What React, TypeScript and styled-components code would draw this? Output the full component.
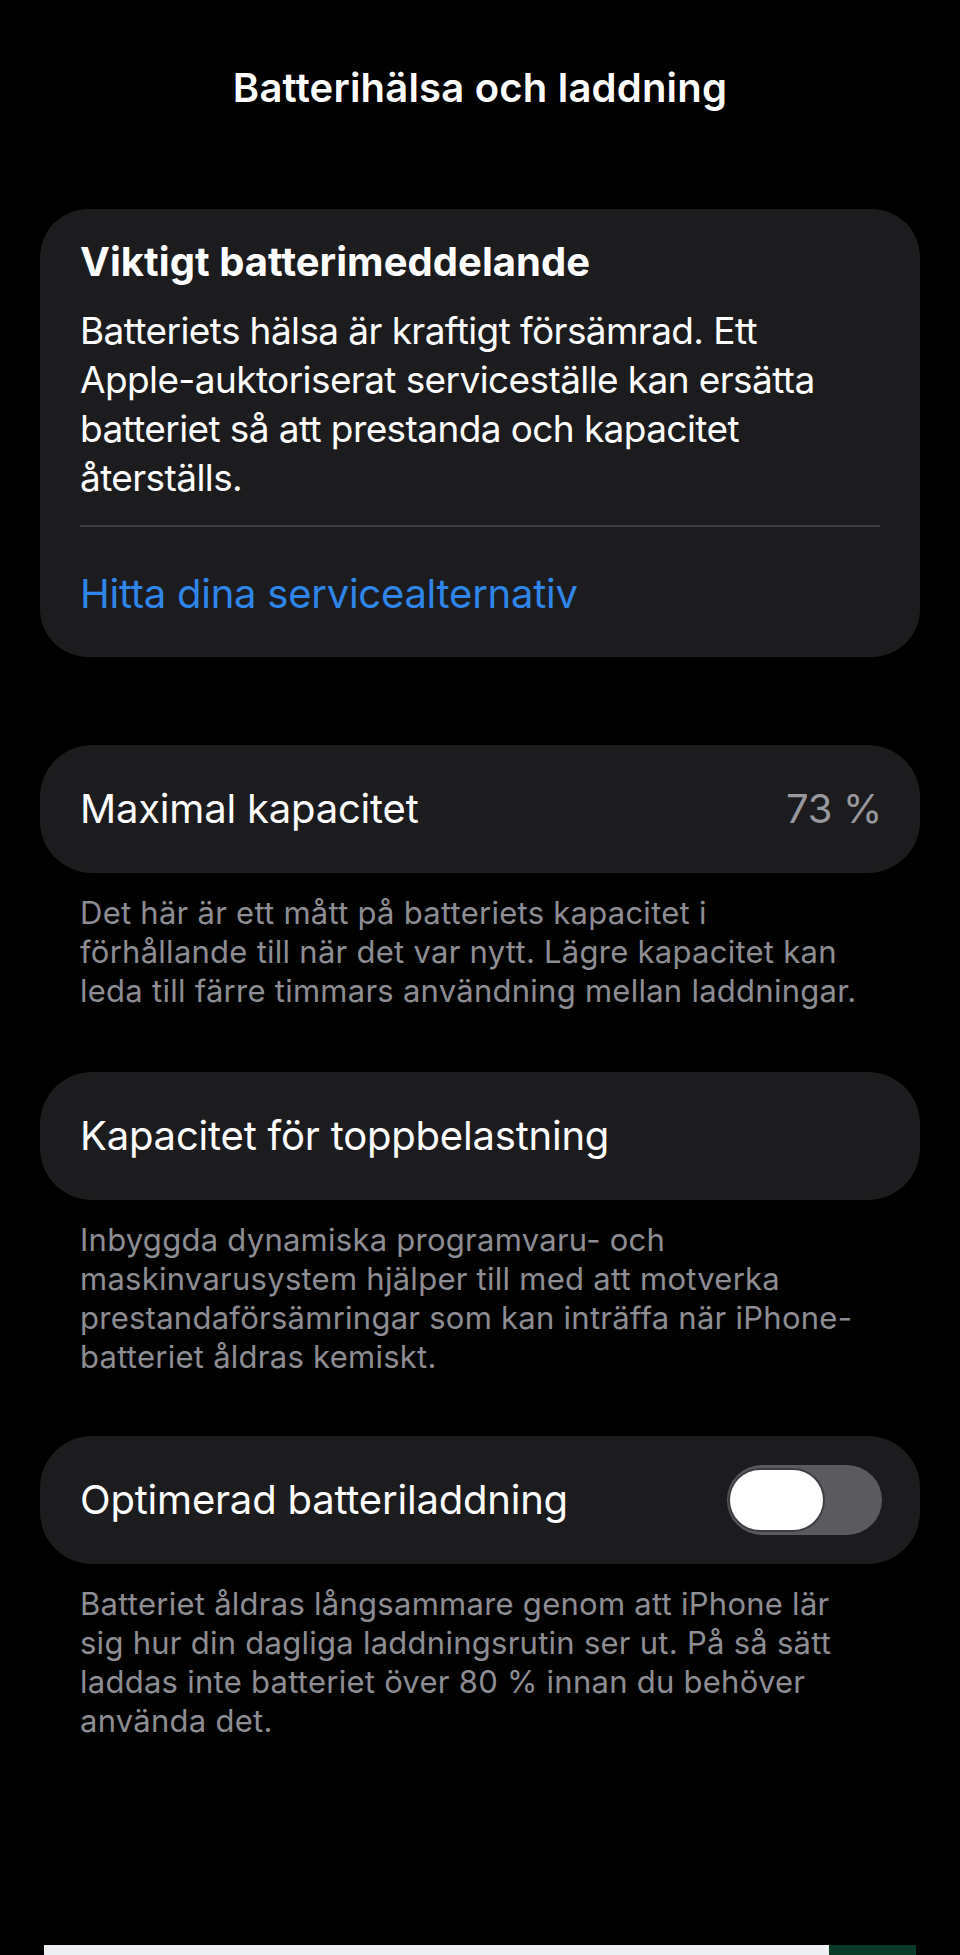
import React from "react";
import styled, { createGlobalStyle } from "styled-components";

const GlobalStyle = createGlobalStyle`
  html, body {
    margin: 0;
    padding: 0;
    background: #000000;
  }
  body {
    font-family: Inter, "Noto Sans", "Liberation Sans", sans-serif;
    -webkit-font-smoothing: antialiased;
  }
`;

const Page = styled.div`
  width: 960px;
  min-height: 1955px;
  box-sizing: border-box;
  padding: 0 40px;
  background: #000000;
  display: flex;
  flex-direction: column;
`;

const Title = styled.h1`
  margin: 64px 0 0;
  font-size: 40px;
  line-height: 48px;
  font-weight: 600;
  color: #ffffff;
  text-align: center;
  letter-spacing: 0.2px;
`;

const Group = styled.section<{ $top: number }>`
  margin-top: ${(p) => p.$top}px;
  display: flex;
  flex-direction: column;
`;

const NoticeCard = styled.div`
  background: #1c1c1e;
  border-radius: 48px;
  padding: 29px 40px 39px;
  display: flex;
  flex-direction: column;
`;

const NoticeHeading = styled.h2`
  margin: 0;
  font-size: 40px;
  line-height: 48px;
  font-weight: 650;
  color: #ffffff;
  letter-spacing: 0.05px;
`;

const NoticeBody = styled.p`
  margin: 20px 0 0;
  font-size: 37px;
  line-height: 49px;
  font-weight: 400;
  color: #ffffff;
  white-space: nowrap;
  letter-spacing: -0.6px;
`;

const Divider = styled.div`
  height: 1.5px;
  margin-top: 23px;
  background: #3c3c3f;
`;

const Link = styled.a`
  margin-top: 43px;
  font-size: 40px;
  line-height: 48px;
  color: #2f86ea;
  text-decoration: none;
  letter-spacing: -0.25px;
`;

const RowCard = styled.div`
  height: 128px;
  box-sizing: border-box;
  background: #1c1c1e;
  border-radius: 52px;
  padding: 0 40px 0 40px;
  display: flex;
  align-items: center;
  justify-content: space-between;
`;

const RowLabel = styled.span`
  font-size: 40px;
  line-height: 48px;
  color: #ffffff;
  letter-spacing: -0.2px;
`;

const RowValue = styled.span`
  font-size: 40px;
  line-height: 48px;
  color: #98989e;
  margin-right: -2px;
  letter-spacing: -0.3px;
`;

const Footer = styled.p`
  margin: 20px 0 0;
  padding: 0 40px;
  font-size: 31px;
  line-height: 39px;
  color: #8d8d93;
  white-space: nowrap;
  letter-spacing: 0.26px;
`;

const SwitchTrack = styled.div`
  width: 155px;
  height: 70px;
  box-sizing: border-box;
  border-radius: 35px;
  background: #5a5a5f;
  padding: 0 3px;
  margin-right: -2px;
  display: flex;
  align-items: center;
`;

const SwitchKnob = styled.div`
  width: 93px;
  height: 60px;
  border-radius: 30px;
  background: #ffffff;
  box-shadow: 0 0 0 2px #3e3e42;
`;

const BottomBar = styled.div`
  margin: auto 4px 0;
  height: 10px;
  display: flex;
`;

const BarLight = styled.div`
  flex: 1;
  background: #eeeff2;
`;

const BarGreen = styled.div`
  width: 87px;
  background: #0b3a29;
`;

export default function App() {
  return (
    <>
      <GlobalStyle />
      <Page>
        <Title>Batterihälsa och laddning</Title>

        <Group $top={97}>
          <NoticeCard>
            <NoticeHeading>Viktigt batterimeddelande</NoticeHeading>
            <NoticeBody>
              Batteriets hälsa är kraftigt försämrad. Ett
              <br />
              Apple-auktoriserat serviceställe kan ersätta
              <br />
              batteriet så att prestanda och kapacitet
              <br />
              återställs.
            </NoticeBody>
            <Divider />
            <Link href="#">Hitta dina servicealternativ</Link>
          </NoticeCard>
        </Group>

        <Group $top={88}>
          <RowCard>
            <RowLabel>Maximal kapacitet</RowLabel>
            <RowValue>73 %</RowValue>
          </RowCard>
          <Footer>
            Det här är ett mått på batteriets kapacitet i
            <br />
            förhållande till när det var nytt. Lägre kapacitet kan
            <br />
            leda till färre timmars användning mellan laddningar.
          </Footer>
        </Group>

        <Group $top={62}>
          <RowCard>
            <RowLabel>Kapacitet för toppbelastning</RowLabel>
          </RowCard>
          <Footer>
            Inbyggda dynamiska programvaru- och
            <br />
            maskinvarusystem hjälper till med att motverka
            <br />
            prestandaförsämringar som kan inträffa när iPhone-
            <br />
            batteriet åldras kemiskt.
          </Footer>
        </Group>

        <Group $top={60}>
          <RowCard>
            <RowLabel>Optimerad batteriladdning</RowLabel>
            <SwitchTrack role="switch" aria-checked="false">
              <SwitchKnob />
            </SwitchTrack>
          </RowCard>
          <Footer>
            Batteriet åldras långsammare genom att iPhone lär
            <br />
            sig hur din dagliga laddningsrutin ser ut. På så sätt
            <br />
            laddas inte batteriet över 80 % innan du behöver
            <br />
            använda det.
          </Footer>
        </Group>

        <BottomBar>
          <BarLight />
          <BarGreen />
        </BottomBar>
      </Page>
    </>
  );
}
